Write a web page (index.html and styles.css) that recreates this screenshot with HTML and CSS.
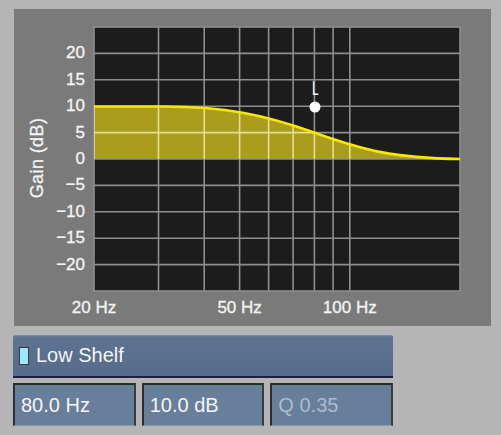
FILE: index.html
```html
<!DOCTYPE html>
<html lang="en">
<head>
  <meta charset="UTF-8" />
  <title>EQ Band – Low Shelf</title>
  <link rel="stylesheet" href="styles.css">
</head>
<body>

  <!-- Frequency response graph -->
  <div class="panel">
    <svg class="graph" width="477" height="317" viewBox="0 0 477 317">
      <defs>
        <clipPath id="fill-clip">
          <path d="M0,79.5 L70,79.5 C130,79.5 170,87.5 220,105.5 S300,131 366,132 L366,132 L0,132 Z"/>
        </clipPath>
      </defs>

      <!-- axis labels -->
      <g class="axis-y">
        <text x="71" y="49.4">20</text>
        <text x="71" y="75.8">15</text>
        <text x="71" y="102.2">10</text>
        <text x="71" y="128.6">5</text>
        <text x="71" y="155">0</text>
        <text x="71" y="181.4">−5</text>
        <text x="71" y="207.8">−10</text>
        <text x="71" y="234.2">−15</text>
        <text x="71" y="260.6">−20</text>
      </g>
      <text class="axis-title" transform="translate(24,149) rotate(-90)" x="0" y="5">Gain (dB)</text>
      <g class="axis-x">
        <text x="80" y="304">20 Hz</text>
        <text x="225.6" y="304">50 Hz</text>
        <text x="335.8" y="304">100 Hz</text>
      </g>

      <g transform="translate(80,18)">
        <rect class="plot-bg" x="0" y="0" width="366" height="264"/>

        <!-- shelf area -->
        <path class="shelf-fill" d="M0,79.5 L70,79.5 C130,79.5 170,87.5 220,105.5 S300,131 366,132 L366,132 L0,132 Z"/>

        <g class="grid">
          <line x1="0" y1="26.4" x2="366" y2="26.4"/>
          <line x1="0" y1="52.8" x2="366" y2="52.8"/>
          <line x1="0" y1="79.2" x2="366" y2="79.2"/>
          <line x1="0" y1="105.6" x2="366" y2="105.6"/>
          <line x1="0" y1="132" x2="366" y2="132"/>
          <line x1="0" y1="158.4" x2="366" y2="158.4"/>
          <line x1="0" y1="184.8" x2="366" y2="184.8"/>
          <line x1="0" y1="211.2" x2="366" y2="211.2"/>
          <line x1="0" y1="237.6" x2="366" y2="237.6"/>
          <line x1="64.5" y1="0" x2="64.5" y2="264"/>
          <line x1="110.2" y1="0" x2="110.2" y2="264"/>
          <line x1="145.6" y1="0" x2="145.6" y2="264"/>
          <line x1="174.6" y1="0" x2="174.6" y2="264"/>
          <line x1="199.1" y1="0" x2="199.1" y2="264"/>
          <line x1="220.4" y1="0" x2="220.4" y2="264"/>
          <line x1="239.1" y1="0" x2="239.1" y2="264"/>
          <line x1="255.8" y1="0" x2="255.8" y2="264"/>
          <rect x="0" y="0" width="366" height="264" fill="none"/>
        </g>

        <!-- grid seen through the shelf area -->
        <g class="grid grid-lit" clip-path="url(#fill-clip)">
          <line x1="0" y1="105.6" x2="366" y2="105.6"/>
          <line x1="0" y1="0" x2="0" y2="264"/>
          <line x1="64.5" y1="0" x2="64.5" y2="264"/>
          <line x1="110.2" y1="0" x2="110.2" y2="264"/>
          <line x1="145.6" y1="0" x2="145.6" y2="264"/>
          <line x1="174.6" y1="0" x2="174.6" y2="264"/>
          <line x1="199.1" y1="0" x2="199.1" y2="264"/>
          <line x1="220.4" y1="0" x2="220.4" y2="264"/>
          <line x1="239.1" y1="0" x2="239.1" y2="264"/>
          <line x1="255.8" y1="0" x2="255.8" y2="264"/>
        </g>

        <path class="shelf-curve" d="M0,79.5 L70,79.5 C130,79.5 170,87.5 220,105.5 S300,131 366,132"/>

        <!-- band handle -->
        <text class="handle-label" x="218" y="68" textLength="6.5" lengthAdjust="spacingAndGlyphs">L</text>
        <circle class="handle" cx="221" cy="80" r="5.5"/>
      </g>
    </svg>
  </div>

  <!-- Band controls -->
  <div class="controls">
    <div class="type-bar">
      <span class="type-led"></span>
      <span class="type-name">Low Shelf</span>
    </div>
    <div class="values">
      <div class="value">80.0 Hz</div>
      <div class="value">10.0 dB</div>
      <div class="value disabled">Q 0.35</div>
    </div>
  </div>

</body>
</html>
```

FILE: styles.css
```css
body {
  margin: 0;
  padding: 0;
  background-color: #b5b5b5;
  font-family: "Liberation Sans", Arial, sans-serif;
  width: 501px;
  height: 435px;
  overflow: hidden;
}
.panel {
  margin: 9px 0 0 14px;
  width: 477px;
  height: 317px;
  background-color: #7a7a7a;
}
.graph {
  display: block;
}
.graph text {
  font-family: "Liberation Sans", Arial, sans-serif;
  fill: #f4f4f4;
  stroke: #f4f4f4;
  stroke-width: 0.3;
}
.axis-y text {
  font-size: 17px;
  text-anchor: end;
}
.axis-x text {
  font-size: 17px;
  text-anchor: middle;
}
.axis-title {
  font-size: 18px;
  letter-spacing: 0.4px;
  text-anchor: middle;
}
.plot-bg {
  fill: #1c1c1c;
}
.shelf-fill {
  fill: #aa9d1d;
}
.grid line,
.grid rect {
  stroke: #8e8e8e;
  stroke-width: 1.6;
}
.grid-lit line {
  stroke: #ece27a;
}
.shelf-curve {
  fill: none;
  stroke: #f6e800;
  stroke-width: 2.6;
}
.handle {
  fill: #ffffff;
}
.graph .handle-label {
  font-size: 20px;
  fill: #ffffff;
  stroke: none;
}
.controls {
  margin: 9px 0 0 13px;
  width: 380px;
}
.type-bar {
  display: flex;
  align-items: center;
  height: 41px;
  border-bottom: 2px solid #1d1d48;
  border-radius: 2px 2px 0 0;
  background: linear-gradient(#7b91ad 0, #5c7391 2px, #566c8a 100%);
  padding-left: 6px;
}
.type-led {
  width: 8px;
  height: 16px;
  background-color: #a0e8fb;
  border: 1px solid #3a3a3a;
  margin-right: 7px;
}
.type-name {
  font-size: 20px;
  color: #f4f4f4;
}
.values {
  display: flex;
  gap: 6px;
  margin-top: 5px;
}
.value {
  box-sizing: border-box;
  width: 123px;
  height: 43px;
  background-color: #687f9b;
  border-top: 2px solid #2c2c2c;
  border-left: 2px solid #2c2c2c;
  border-right: 2px solid #3a3a3a;
  border-bottom: 1px solid #8495a9;
  padding-left: 6px;
  display: flex;
  align-items: center;
  font-size: 20px;
  color: #f4f4f4;
}
.value.disabled {
  color: #aebacb;
}
```
